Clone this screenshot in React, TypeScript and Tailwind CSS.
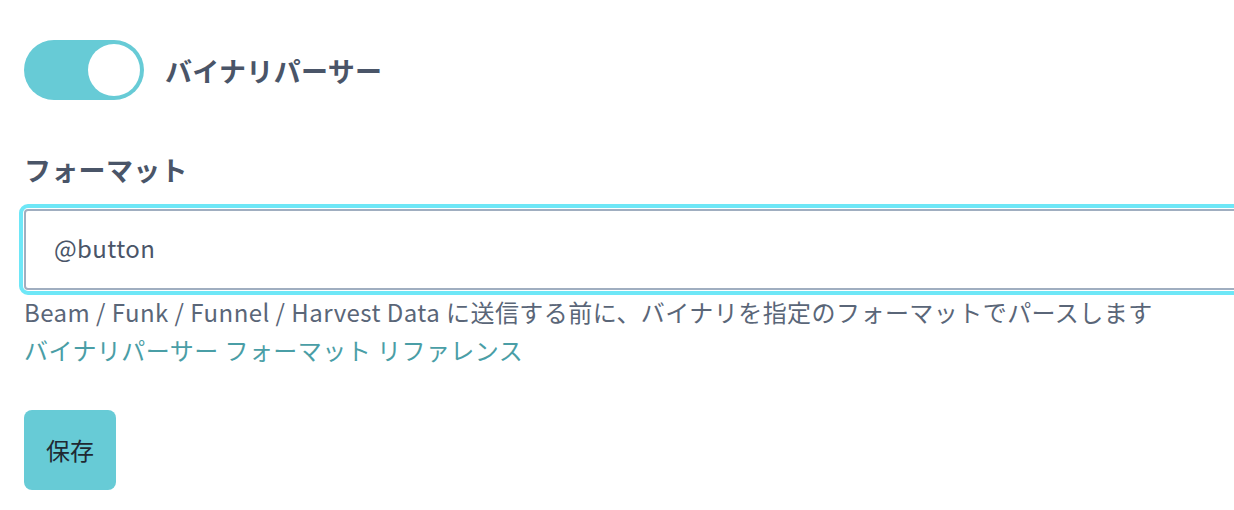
import React from "react";

export default function App() {
  return (
    <div
      className="w-[1234px] h-[510px] overflow-hidden bg-white pt-10 pl-6"
      style={{ fontFamily: '"Noto Sans CJK JP", "Noto Sans", sans-serif' }}
    >
      <div className="flex items-center h-[60px]">
        <button
          type="button"
          aria-pressed="true"
          className="relative w-[120px] h-[60px] rounded-full bg-[#67cbd6] shrink-0"
        >
          <span className="absolute right-1 top-[4px] w-[52px] h-[52px] rounded-full bg-white" />
        </button>
        <span className="ml-[21px] text-[27px] leading-none font-bold tracking-[0.3px] text-[#4a5568]">
          バイナリパーサー
        </span>
      </div>

      <div className="mt-[50px] text-[27px] leading-[40px] font-bold tracking-[0.3px] text-[#4a5568]">
        フォーマット
      </div>

      <div className="mt-[19px] w-[1250px] h-[81px] border-2 border-[#a0aec0] rounded-[4px] outline-4 outline-solid outline-[#6ee7f7] outline-offset-1 flex items-center pl-[28px]">
        <span className="text-[24px] text-[#4a5568] leading-none tracking-[0.4px] -mt-[3px]">@button</span>
      </div>

      <div className="mt-[3px] text-[24px] leading-[38px] tracking-[0.45px] text-[#5a6678]">
        Beam / Funk / Funnel / Harvest Data に送信する前に、バイナリを指定のフォーマットでパースします
      </div>
      <div className="text-[24px] leading-[38px] tracking-[0.45px] text-[#4a9ea6]">
        バイナリパーサー フォーマット リファレンス
      </div>

      <button
        type="button"
        className="mt-[41px] w-[92px] h-[80px] rounded-[8px] bg-[#67cbd6] text-[24px] text-[#1f2933] flex items-center justify-center"
      >
        保存
      </button>
    </div>
  );
}
